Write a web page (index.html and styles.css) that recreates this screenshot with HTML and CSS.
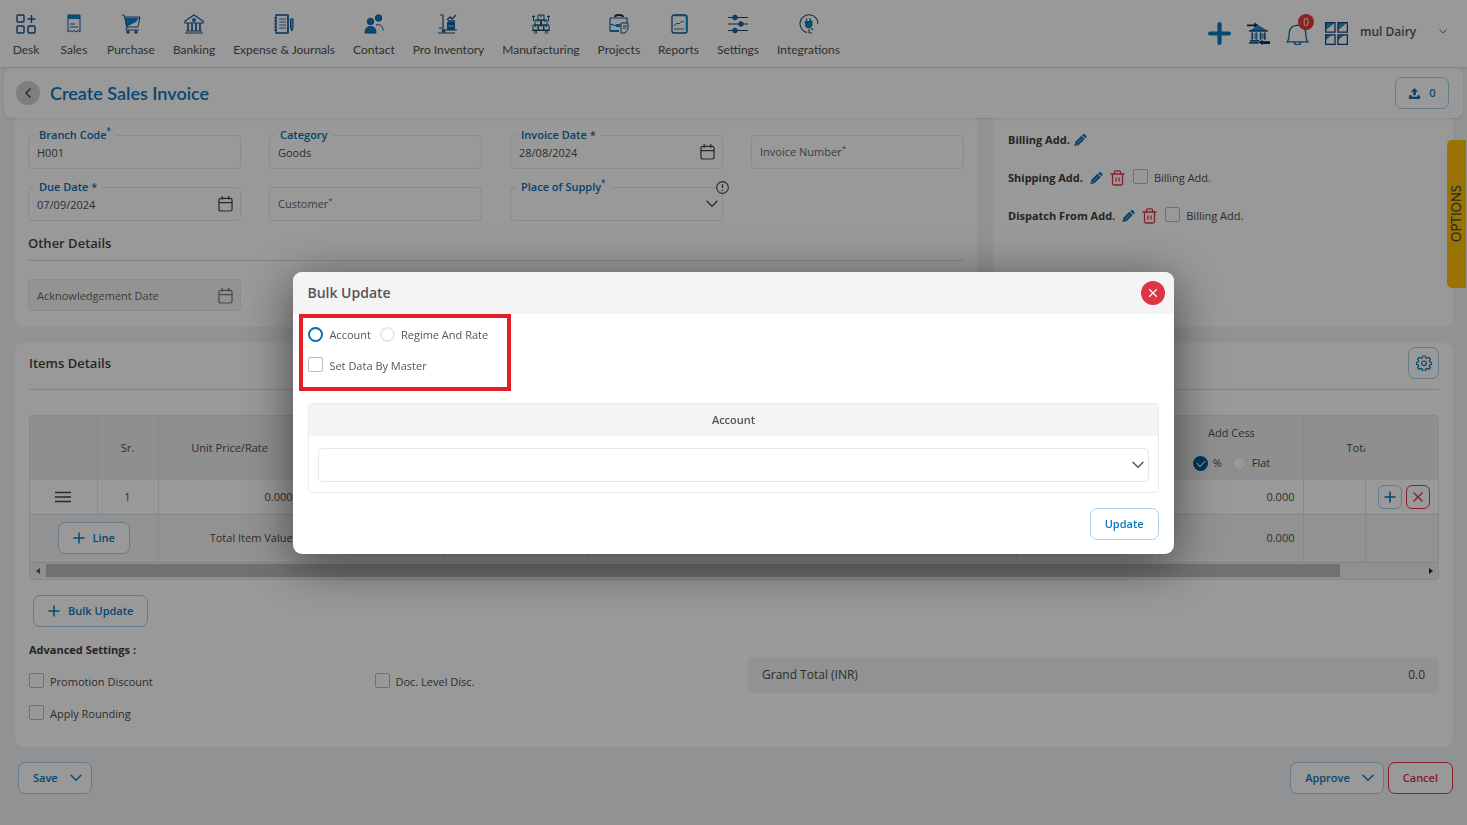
FILE: index.html
```html
<!DOCTYPE html>
<html lang="en">
<head>
<meta charset="utf-8">
<title>Create Sales Invoice</title>
<link rel="stylesheet" href="styles.css">
</head>
<body>
<svg class="defs" width="0" height="0" aria-hidden="true">
  <symbol id="cal" viewBox="0 0 16 18"><path d="M3 3.500h10a2 2 0 0 1 2 2V15a2 2 0 0 1-2 2H3a2 2 0 0 1-2-2V5.500a2 2 0 0 1 2-2zM1 8h14M4.500 1v4M11.500 1v4" fill="none" stroke="currentColor" stroke-width="1.300"/></symbol>
  <symbol id="chev" viewBox="0 0 12 8"><path d="M1 1.300l5 5 5-5" fill="none" stroke="currentColor" stroke-width="1.500" stroke-linecap="round"/></symbol>
  <symbol id="plus" viewBox="0 0 12 12"><path d="M6 .5v11M.5 6h11" fill="none" stroke="currentColor" stroke-width="1.500"/></symbol>
  <symbol id="cross" viewBox="0 0 12 12"><path d="M1.500 1.500l9 9M10.500 1.500l-9 9" fill="none" stroke="currentColor" stroke-width="1.400"/></symbol>
  <symbol id="pencil" viewBox="0 0 14 14"><path d="M.5 13.500l.8-4.300L8 2.500 11.500 6l-6.700 6.700zM8.800 1.700l.9-.9q1-.7 1.900 0l1.600 1.600q.8 1 0 1.900l-.9.9z" fill="currentColor"/><path d="M3.500 10.500l5.200-5.200M1.800 10.800l1.400 1.400" stroke="#fff" stroke-width=".7"/></symbol>
  <symbol id="trash" viewBox="0 0 15 16"><path d="M.5 4h14M2.500 4v9.500q0 1.500 1.500 1.500h7q1.500 0 1.500-1.500V4M4.500 4V2q0-1.200 1.200-1.200h3.600q1.200 0 1.200 1.200v2M6 7.500v4M9 7.500v4" fill="none" stroke="currentColor" stroke-width="1.300"/></symbol>
</svg>

<header class="topbar">
  <nav class="nav">
    <a href="#"><svg viewBox="0 0 20 20"><g fill="none" stroke="#1c4f8c" stroke-width="1.400"><rect x="1" y="1" width="7" height="7" rx="1"/><rect x="1" y="12" width="7" height="7" rx="1"/><rect x="12" y="12" width="7" height="7" rx="1"/><path d="M15.500 1v8M11.500 5h8"/></g></svg>Desk</a>
    <a href="#"><svg viewBox="0 0 20 20"><path d="M4 1h12v4H4z" fill="#0a84c8"/><path d="M4 18V1h12v17l-2-1.500-2 1.500-2-1.500L8 18l-2-1.500zM6 10h5M6 13h8" fill="none" stroke="#1c5a94"/></svg>Sales</a>
    <a href="#"><svg viewBox="0 0 20 20"><path d="M4 4h14l-3 4-10 5z" fill="#0a84c8"/><path d="M1 1h2l3 12h11l2-10H4M6 13l-1 3h13" fill="none" stroke="#1c4f8c"/><circle cx="7" cy="18" r="1.700" fill="#1c5a94"/><circle cx="15" cy="18" r="1.700" fill="#1c5a94"/></svg>Purchase</a>
    <a href="#"><svg viewBox="0 0 20 20"><path d="M10 1l9 6v2H1V7zM2 17h16M1 19h18" fill="none" stroke="#1c4f8c" stroke-width="1.200"/><circle cx="10" cy="6" r="2" fill="#0a84c8"/><path d="M4 9v8M8 9v8M12 9v8M16 9v8" stroke="#1c6aa4" stroke-width="1.800"/></svg>Banking</a>
    <a href="#"><svg viewBox="0 0 20 20"><path d="M2 1h12v18H2z" fill="none" stroke="#1c4f8c" stroke-width="1.300"/><path d="M0 4h3M0 7h3M0 10h3M0 13h3M0 16h3" stroke="#1c4f8c"/><path d="M5 5h7M5 8h7M5 11h7M5 14h7" stroke="#0a84c8"/><path d="M14 1v18" stroke="#0a6aa8" stroke-width="1.500"/><path d="M16.500 5h2.500v9l-1.200 3-1.300-3z" fill="#6fa5cc" stroke="#1c4f8c"/></svg>Expense &amp; Journals</a>
    <a href="#"><svg viewBox="0 0 20 20"><g fill="#0a7cc0" stroke="#1c4f8c"><circle cx="6.500" cy="7.500" r="3.200"/><circle cx="14.500" cy="4" r="3.200"/><path d="M1 19q0-6.500 5.500-6.500T12 19z"/></g><path d="M12 11q6-2 7.300 5.500" fill="none" stroke="#1c4f8c"/></svg>Contact</a>
    <a href="#"><svg viewBox="0 0 20 20"><path d="M2 1h3v14M6 16h13M0 19h17M1 14h3" fill="none" stroke="#1c4f8c" stroke-width="1.200"/><circle cx="5.500" cy="17" r="2" fill="#0a6aa8"/><path d="M9 8h8v8H9z" fill="#0a6aa8"/><path d="M9 6l3-3 2 2 4-4M10 7h7" fill="none" stroke="#1c4f8c" stroke-width="1.300"/><path d="M10 12h6" stroke="#a9d0ea"/></svg>Pro Inventory</a>
    <a href="#"><svg viewBox="0 0 20 20"><g fill="none" stroke="#1c5070" stroke-width="1"><path d="M7 1h6v5H7zM4 6h5.500v5H4zM10.500 6H16v5h-5.500zM2 11h5v5H2zM7.500 11h5v5h-5zM13 11h5v5h-5zM1 16.500h18M2.500 2v5M17.500 2v5M1 3l1.500-1.500L4 3M16 3l1.500-1.500L19 3"/><circle cx="4.500" cy="18.300" r="1.200"/><circle cx="15.500" cy="18.300" r="1.200"/></g><path d="M10 1v2M6.500 6v2M13.500 6v2M4.500 11v2M10 11v2M15.500 11v2" stroke="#0a6aa8" stroke-width="1.300"/></svg>Manufacturing</a>
    <a href="#"><svg viewBox="0 0 20 20"><path d="M6 3q0-2 4-2t4 2" fill="none" stroke="#15305c" stroke-width="2"/><path d="M1 4h17v5M1 4v13h9M1 10l7 2h4" fill="none" stroke="#1c5a94" stroke-width="1.200"/><path d="M1 16h9v2H1zM7 10h4v3H7z" fill="#0a84c8"/><path d="M12 9h7v6l-3 4h-4zM14 12h4M14 14h3" fill="#fff" stroke="#1c4f8c"/></svg>Projects</a>
    <a href="#"><svg viewBox="0 0 20 20"><rect x="3" y="1" width="15" height="18" rx="2" fill="none" stroke="#1c4f8c" stroke-width="1.300"/><path d="M5 1.500h11q1.500 0 1.500 2V17" fill="none" stroke="#0a84c8" stroke-width="1.500"/><path d="M5 12l3-3 2 1 3-3 2 1M5 15h10" fill="none" stroke="#0a72b4"/></svg>Reports</a>
    <a href="#"><svg viewBox="0 0 20 20"><path d="M0 3.500h20M0 10h20M0 16.500h20" stroke="#1c3f6c" stroke-width="1.200"/><g fill="#0a72b4" stroke="#1c4f8c"><circle cx="7" cy="3.500" r="2.300"/><circle cx="13" cy="10" r="2.300"/><circle cx="7" cy="16.500" r="2.300"/></g></svg>Settings</a>
    <a href="#"><svg viewBox="0 0 20 20"><path d="M10 19v-4M8 18.500A9 9 0 1 1 19 10M10 19h3" fill="none" stroke="#1c4f6c" stroke-width="1.100"/><path d="M6 8l7-1q2 5-2 7-4 1-5-2z" fill="#0a84c8"/><path d="M7.500 8V4.500M11 8V4M12 14l2 2M5.500 8.200l8-1.200" stroke="#1c5a94" stroke-width="1.200"/></svg>Integrations</a>
  </nav>
  <div class="tools">
    <button class="tool" aria-label="Add"><svg viewBox="0 0 22 22"><path d="M11 2v18M2 11h18" stroke="#0a78be" stroke-width="4" stroke-linecap="round"/></svg></button>
    <button class="tool" aria-label="Bank transfer"><svg viewBox="0 0 22 22"><path d="M0 2.500h7V.5L11 3 7 5.500v-1.500H0z" fill="#132a55"/><path d="M3 8l8-5 8 5z" fill="#2a8fc8"/><path d="M2 8.500h18M5 10v7M9 10v7M13 10v7M17 10v7M3 18h9M2 20h9" stroke="#1c5a94" stroke-width="1.700"/><path d="M7 11h2v5H7zM14 11h2v5h-2z" fill="#49a5d8"/><path d="M22 21h-7v1l-4-2.500 4-2.500v1.500h7z" fill="#132a55"/></svg></button>
    <button class="tool bell" aria-label="Notifications"><svg viewBox="0 0 22 22"><path d="M1 19q2-2 2-8 0-7 8-8 8 1 8 8 0 6 2 8zM8 19q0 3 3 3t3-3" fill="none" stroke="#1670ac" stroke-width="1.300"/></svg><span class="badge">0</span></button>
    <button class="tool" aria-label="Apps"><svg viewBox="0 0 22 22"><path d="M.5.500H10L.5 8zM12.500.5h9l-9 7.500zM.5 12.500h6l-6 5zM12.500 12.500h6l-6 5z" fill="#2a8fc8"/><path d="M.6.600h9v9h-9zM12.400.600h9v9h-9zM.6 12.400h9v9h-9zM12.400 12.400h9v9h-9z" fill="none" stroke="#1c3f78" stroke-width="1.200"/></svg></button>
    <button class="company"><span>mul Dairy</span><svg class="tiny"><use href="#chev"/></svg></button>
  </div>
</header>

<div class="titlebar">
  <button class="back" aria-label="Back"><svg viewBox="0 0 10 12"><path d="M7.500 1.500L3 6l4.500 4.500" fill="none" stroke="#444" stroke-width="1.400"/></svg></button>
  <h1>Create Sales Invoice</h1>
  <button class="btn upload"><svg viewBox="0 0 14 14"><path d="M7 1l4 4H8.500v4h-3V5H3zM1 9h3v1.500h6V9h3v4H1z" fill="currentColor"/></svg>0</button>
</div>

<main class="page">
  <div class="cols">
    <section class="card details">
      <div class="fields">
        <div class="field"><input id="branch" value="H001"><label for="branch">Branch Code<sup>*</sup></label></div>
        <div class="field"><input id="category" value="Goods"><label for="category">Category</label></div>
        <div class="field"><input id="invdate" value="28/08/2024"><label for="invdate">Invoice Date *</label><svg class="cal"><use href="#cal"/></svg></div>
        <div class="field empty"><input id="invno"><label for="invno">Invoice Number<sup>*</sup></label></div>
        <div class="field"><input id="due" value="07/09/2024"><label for="due">Due Date *</label><svg class="cal"><use href="#cal"/></svg></div>
        <div class="field empty"><input id="customer"><label for="customer">Customer<sup>*</sup></label></div>
        <div class="field"><select id="place"><option></option></select><label for="place">Place of Supply<sup>*</sup></label><svg class="arrow"><use href="#chev"/></svg><svg class="info" viewBox="0 0 12 12"><circle cx="6" cy="6" r="5.400" fill="#fff" stroke="#444"/><path d="M6 3v3.500M6 8v1.200" stroke="#444" stroke-width="1.200"/></svg></div>
      </div>
      <h2>Other Details</h2>
      <div class="fields other">
        <div class="field empty off"><input id="ack" disabled><label for="ack">Acknowledgement Date</label><svg class="cal"><use href="#cal"/></svg></div>
      </div>
    </section>
    <section class="card address">
      <div class="addr"><b>Billing Add.</b><button class="icon edit first" aria-label="Edit billing address"><svg><use href="#pencil"/></svg></button></div>
      <div class="addr"><b>Shipping Add.</b><button class="icon edit" aria-label="Edit shipping address"><svg><use href="#pencil"/></svg></button><button class="icon del" aria-label="Delete shipping address"><svg><use href="#trash"/></svg></button><label class="check"><input type="checkbox">Billing Add.</label></div>
      <div class="addr"><b>Dispatch From Add.</b><button class="icon edit" aria-label="Edit dispatch address"><svg><use href="#pencil"/></svg></button><button class="icon del" aria-label="Delete dispatch address"><svg><use href="#trash"/></svg></button><label class="check"><input type="checkbox">Billing Add.</label></div>
    </section>
  </div>

  <section class="card items">
    <div class="items-head">
      <h2>Items Details</h2>
      <button class="btn gear" aria-label="Table settings"><svg viewBox="0 0 16 16"><path d="M6.700 1h2.600l.4 1.900 1.200.5 1.700-1.100 1.800 1.800-1.100 1.700.5 1.200 1.900.4v2l-1.900.4-.5 1.200 1.100 1.700-1.800 1.800-1.700-1.100-1.200.5-.4 1.900H6.700l-.4-1.900-1.200-.5-1.700 1.100-1.800-1.800 1.100-1.700-.5-1.200L.3 9.400v-2l1.900-.4.5-1.200-1.100-1.700 1.800-1.800 1.700 1.100 1.200-.5z" fill="none" stroke="currentColor" stroke-width="1.200"/><circle cx="8" cy="8.300" r="2.300" fill="none" stroke="currentColor" stroke-width="1.200"/></svg></button>
    </div>
    <div class="grid">
      <table>
        <colgroup><col class="c-drag"><col class="c-sr"><col><col><col><col><col><col><col><col><col class="c-total"><col class="c-act"></colgroup>
        <thead><tr><th></th><th>Sr.</th><th>Unit Price/Rate</th><th></th><th></th><th></th><th></th><th></th><th></th>
          <th>Add Cess<div class="cess"><label><input type="radio" name="cess" class="tick" checked>%</label><label><input type="radio" name="cess">Flat</label></div></th>
          <th class="cut">Total</th><th class="act"></th></tr></thead>
        <tbody><tr><td class="mid"><svg class="drag" viewBox="0 0 16 12"><path d="M0 1.500h16M0 6h16M0 10.500h16" stroke="#444" stroke-width="1.300"/></svg></td><td class="mid">1</td><td>0.000</td><td></td><td></td><td></td><td></td><td></td><td></td><td>0.000</td><td></td>
          <td class="act"><div class="acts"><button class="sq" aria-label="Add row"><svg><use href="#plus"/></svg></button><button class="sq red" aria-label="Remove row"><svg><use href="#cross"/></svg></button></div></td></tr></tbody>
        <tfoot><tr><td colspan="2" class="mid"><button class="btn line"><svg><use href="#plus"/></svg>Line</button></td><td>Total Item Value</td><td></td><td></td><td></td><td></td><td></td><td></td><td>0.000</td><td></td><td class="act"></td></tr></tfoot>
      </table>
      <div class="scroll"><svg viewBox="0 0 4 6"><path d="M4 0v6L0 3z" fill="#555"/></svg><div class="track"><div class="thumb"></div></div><svg viewBox="0 0 4 6"><path d="M0 0v6l4-3z" fill="#222"/></svg></div>
    </div>
    <button class="btn bulk"><svg><use href="#plus"/></svg>Bulk Update</button>
    <div class="lower">
      <div>
        <h3>Advanced Settings :</h3>
        <div class="opts">
          <label class="check"><input type="checkbox">Promotion Discount</label>
          <label class="check"><input type="checkbox">Doc. Level Disc.</label>
          <label class="check"><input type="checkbox">Apply Rounding</label>
        </div>
      </div>
      <div class="total"><span>Grand Total (INR)</span><span>0.0</span></div>
    </div>
  </section>

  <footer class="actions">
    <button class="btn">Save<svg class="dd"><use href="#chev"/></svg></button>
    <div class="right"><button class="btn">Approve<svg class="dd"><use href="#chev"/></svg></button><button class="btn cancel">Cancel</button></div>
  </footer>
</main>
<button class="options">OPTIONS</button>

<div class="backdrop">
  <div class="modal" role="dialog" aria-labelledby="mt">
    <div class="modal-head"><h2 id="mt">Bulk Update</h2><button class="close" aria-label="Close"><svg><use href="#cross"/></svg></button></div>
    <div class="modal-body">
      <div class="highlight"></div>
      <div class="radios"><label><input type="radio" name="kind" checked>Account</label><label><input type="radio" name="kind">Regime And Rate</label></div>
      <label class="check master"><input type="checkbox">Set Data By Master</label>
      <div class="acct">
        <label for="acct">Account</label>
        <div class="acct-body"><select id="acct"><option></option></select><svg class="arrow"><use href="#chev"/></svg></div>
      </div>
      <button class="btn update">Update</button>
    </div>
  </div>
</div>
</body>
</html>
```
FILE: styles.css
```css
* { box-sizing: border-box; }
body { margin: 0; min-height: 100vh; background: #f1f3f6; font: 11px/16px "Open Sans", "Noto Sans", sans-serif; color: #4c4c4c; }
button, input, select { font: inherit; color: inherit; }
button { padding: 0; border: 0; background: none; cursor: pointer; }
h1, h2, h3 { margin: 0; }
svg { display: block; flex: none; }
.defs { position: absolute; }

.topbar { display: flex; justify-content: space-between; height: 67px; padding: 0 20px 0 11px; background: #fff; box-shadow: 0 1px 3px rgba(0, 0, 0, .15); }
.nav { display: flex; gap: 18px; padding-top: 14px; }
.nav a { display: flex; flex-direction: column; align-items: center; gap: 8px; min-width: 30px; color: #505050; text-decoration: none; font: 12px/16px Lato, sans-serif; white-space: nowrap; }
.nav svg { width: 20px; height: 20px; }
.tools { display: flex; align-items: center; gap: 16px; }
.tool svg { width: 23px; height: 23px; }
.bell { position: relative; }
.badge { position: absolute; top: -8px; right: -5px; width: 16px; height: 16px; border-radius: 50%; background: #e23c3c; color: #fff; font-size: 10px; line-height: 16px; }
.company { display: flex; align-items: center; justify-content: space-between; width: 87px; height: 20px; margin: 0 0 4px -4px; font-size: 12px; font-weight: 600; color: #555; }
.tiny { width: 8px; height: 5px; }

.titlebar { position: relative; display: flex; align-items: center; gap: 10px; height: 50px; margin: 1px 4px 0; padding: 0 14px 0 12px; background: #fff; border-radius: 8px; box-shadow: 0 1px 2px rgba(0, 0, 0, .1); }
.titlebar h1 { flex: 1; color: #0a78be; font: 600 18px/24px Lato, sans-serif; }
.back { display: grid; place-items: center; width: 24px; height: 24px; border-radius: 50%; background: #d2d2d2; }
.back svg { width: 10px; height: 12px; }

.btn { display: inline-flex; align-items: center; justify-content: center; gap: 8px; height: 32px; padding: 0 14px; border: 1px solid #a9cfe6; border-radius: 7px; background: #fff; color: #0a78be; font-weight: 600; white-space: nowrap; }
.btn svg { width: 12px; height: 12px; }
.btn .dd { width: 12px; height: 8px; margin: 0 -5px 0 4px; }
.upload { padding: 0 12px; min-width: 54px; }
.upload svg { width: 13px; height: 13px; }

.page { padding: 0 14px 0 15px; }
.cols { display: grid; grid-template-columns: 962fr 460fr; gap: 16px; }
.card { background: #fff; border-radius: 8px; padding: 0 14px 16px; }
.cols .card { border-radius: 0 0 8px 8px; }
.details { padding: 17px 13px 16px; }
.fields { display: grid; grid-template-columns: repeat(4, 1fr); gap: 18px 28px; }
.field { position: relative; height: 34px; }
.field input, .field select, .acct select { width: 100%; height: 100%; padding: 0 8px; border: 1px solid #e8e8e8; border-radius: 4px; background: #fff; appearance: none; }
.field label { position: absolute; top: -8px; left: 6px; padding: 0 5px; background: #fff; color: #0a6eb0; font-weight: 600; }
.field.empty label { top: 9px; left: 4px; background: none; color: #666; font-weight: 400; }
sup { font-size: 8px; line-height: 1; vertical-align: 5px; }
.cal { position: absolute; top: 8px; right: 8px; width: 15px; height: 17px; color: #444; }
.arrow { position: absolute; top: 13px; right: 5px; width: 12px; height: 8px; }
.info { position: absolute; top: -6px; right: -6px; width: 13px; height: 13px; }
h2 { font-size: 13px; line-height: 18px; font-weight: 600; color: #444; }
.details h2 { padding: 13px 0 8px; border-bottom: 1px solid #ddd; }
.other { padding-top: 18px; }
.other .field { height: 32px; }
.off input { background: #f6f6f6; }
.off .cal { color: #777; }

.address { padding: 12px 15px; }
.addr { display: flex; align-items: center; height: 20px; margin-bottom: 18px; }
.addr b { color: #3c3c3c; }
.icon { margin-left: 7px; }
.icon.first { margin-left: 4px; }
.edit { color: #0a6eb0; }
.edit svg { width: 13px; height: 14px; }
.del { color: #dc3545; }
.del svg { width: 15px; height: 16px; }
.addr .check { margin-left: 8px; }

.check { display: flex; align-items: center; gap: 6px; }
.check input { appearance: none; flex: none; width: 15px; height: 15px; margin: 0 0 3px; border: 1px solid #bbb; border-radius: 2px; background: #fff; }

.items { margin-top: 16px; padding-top: 4px; padding-bottom: 24px; }
.items-head { display: flex; justify-content: space-between; align-items: center; padding-bottom: 10px; border-bottom: 1px solid #ddd; }
.gear { width: 31px; padding: 0; }
.gear svg { width: 16px; height: 16px; }
.grid { margin-top: 25px; border: 1px solid #e4e4e4; border-radius: 4px; overflow: hidden; }
table { width: 100%; table-layout: fixed; border-collapse: collapse; }
.c-drag { width: 67px; }
.c-sr { width: 61px; }
.c-total { width: 62px; }
.c-act { width: 73px; }
th, td { padding: 0 8px; border-right: 1px solid #e4e4e4; font-weight: 400; text-align: right; white-space: nowrap; }
th { height: 64px; background: #efefef; text-align: center; font-weight: 500; }
td { height: 34px; border-bottom: 1px solid #ddd; }
th:last-child, td:last-child { border-right: 0; }
tfoot td { height: 48px; background: #f4f4f4; font-weight: 500; }
.mid { text-align: center; }
th.cut { padding: 0 0 0 43px; overflow: hidden; text-align: left; }
.act { border-left: 1px solid #ccc; }
.cess { display: flex; justify-content: center; gap: 10px; margin-top: 14px; }
.cess label { display: flex; align-items: center; gap: 5px; }
.cess input, .radios input { appearance: none; width: 15px; height: 15px; margin: 0; border: 2px solid #e8e8e8; border-radius: 50%; background: #fff; }
.cess .tick { border: 0; background: #005a96; }
.cess .tick::after { content: ""; display: block; width: 7px; height: 4px; margin: 4px; border: solid #fff; border-width: 0 0 1px 1px; transform: rotate(-45deg); }
.drag { width: 16px; height: 12px; margin: 0 auto; }
.acts { display: flex; gap: 4px; justify-content: center; padding-left: 4px; }
.sq { display: grid; place-items: center; width: 24px; height: 24px; border: 1px solid #a9cfe6; border-radius: 6px; color: #0a6eb0; }
.sq svg { width: 12px; height: 12px; }
.sq.red { border-color: #dc3545; color: #dc3545; }
.scroll { display: flex; align-items: center; gap: 6px; height: 16px; padding: 0 5px 0 6px; background: #f0f0f0; }
.scroll svg { width: 4px; height: 6px; }
.track { flex: 1; }
.thumb { width: 94%; height: 13px; background: #bdbdbd; }
.bulk { margin: 15px 0 0 4px; }
.lower { display: grid; grid-template-columns: 1fr 1fr; gap: 28px; padding-top: 15px; }
h3 { font-size: 11px; line-height: 16px; font-weight: 700; color: #3c3c3c; }
.opts { display: grid; grid-template-columns: 1fr 1fr; row-gap: 14px; padding-top: 15px; }
.total { display: flex; justify-content: space-between; align-items: center; align-self: start; height: 36px; margin-top: 15px; padding: 0 14px; border-radius: 5px; background: #f4f4f4; font-size: 12px; font-weight: 500; }
.actions { display: flex; justify-content: space-between; padding: 15px 0 30px 3px; }
.right { display: flex; gap: 4px; }
.cancel { border-color: #dc3545; color: #dc3545; }
.options { position: absolute; top: 140px; right: 1px; width: 19px; height: 148px; border-radius: 0 5px 5px 0; background: #ffc107; color: #444; font: 13px/19px Lato, sans-serif; writing-mode: vertical-rl; rotate: 180deg; }

.backdrop { position: fixed; inset: 0; display: flex; align-items: center; justify-content: center; background: rgba(0, 0, 0, .4); }
.modal { width: 60%; background: #fff; border-radius: 9px; box-shadow: 0 10px 50px rgba(0, 0, 0, .55); overflow: hidden; color: #555; }
.modal-head { display: flex; align-items: center; justify-content: space-between; height: 42px; padding: 0 9px 0 14px; background: #f4f4f4; }
.modal-head h2 { font-size: 14px; color: #555; }
.close { display: grid; place-items: center; width: 24px; height: 24px; border-radius: 50%; background: #dc3545; color: #fff; }
.close svg { width: 10px; height: 10px; }
.modal-body { position: relative; display: flex; flex-direction: column; padding: 13px 15px 14px; }
.highlight { position: absolute; top: 0; left: 6px; width: 212px; height: 77px; border: 4px solid #e01f26; pointer-events: none; }
.radios { display: flex; gap: 9px; }
.radios label { display: flex; align-items: center; gap: 6px; }
.radios input:checked { border-color: #0a6eb0; }
.master { margin-top: 14px; }
.acct { margin-top: 28px; border: 1px solid #ebebeb; border-radius: 4px; }
.acct > label { display: block; background: #f4f4f4; text-align: center; line-height: 32px; font-weight: 600; }
.acct-body { position: relative; height: 56px; padding: 12px 9px 10px; }
.acct-body .arrow { top: 25px; right: 14px; }
.update { align-self: flex-end; margin-top: 15px; }
```
